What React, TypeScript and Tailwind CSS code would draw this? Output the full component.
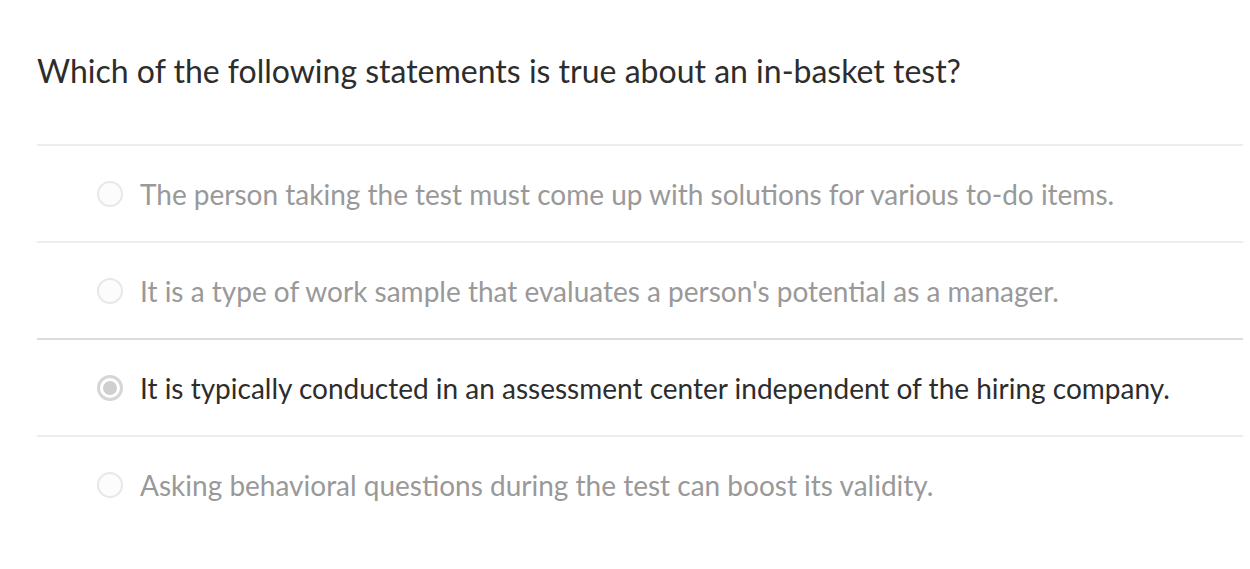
import React from 'react';

interface Option {
  label: string;
  selected?: boolean;
}

const options: Option[] = [
  { label: 'The person taking the test must come up with solutions for various to-do items.' },
  { label: "It is a type of work sample that evaluates a person's potential as a manager." },
  { label: 'It is typically conducted in an assessment center independent of the hiring company.', selected: true },
  { label: 'Asking behavioral questions during the test can boost its validity.' },
];

const Radio: React.FC<{ selected?: boolean }> = ({ selected }) =>
  selected ? (
    <span className="flex h-[26px] w-[26px] shrink-0 items-center justify-center rounded-full border-[3px] border-[#d6d6d6] bg-white">
      <span className="h-[14px] w-[14px] rounded-full bg-[#cfcfcf]" />
    </span>
  ) : (
    <span className="h-[26px] w-[26px] shrink-0 rounded-full border-2 border-[#e8e8e8] bg-[#fcfcfc]" />
  );

export default function App() {
  return (
    <div className="min-h-[569px] bg-white pl-[37px] pr-[7px] font-['Lato',sans-serif]">
      <h1 className="pt-[49px] text-[32px] leading-[44px] text-[#2d2d2d]">
        Which of the following statements is true about an in-basket test?
      </h1>
      <ul className="mt-[51px]">
        {options.map((opt, i) => (
          <li
            key={i}
            className={`flex h-[97px] items-center gap-[17px] border-t-2 pl-[60px] ${
              opt.selected ? 'border-[#dcdcdc]' : 'border-[#ededed]'
            }`}
          >
            <Radio selected={opt.selected} />
            <span
              className={`text-[28px] leading-[36px] ${
                opt.selected ? 'text-[#2d2d2d]' : 'text-[#999999]'
              }`}
            >
              {opt.label}
            </span>
          </li>
        ))}
      </ul>
    </div>
  );
}
